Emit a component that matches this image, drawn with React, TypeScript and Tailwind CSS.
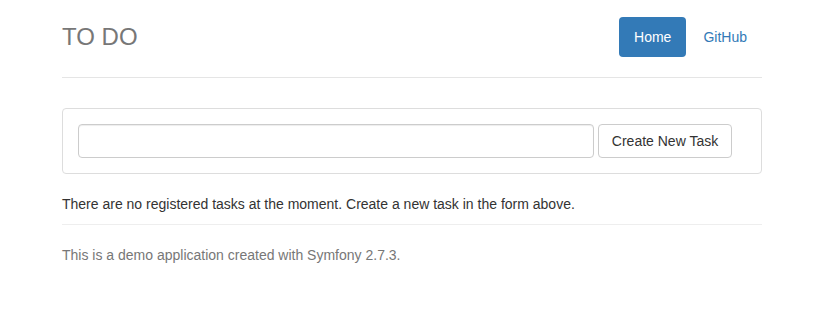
import React from 'react';

const App: React.FC = () => {
  return (
    <div className="min-h-screen bg-white font-['Liberation_Sans',Arial,sans-serif] text-[14px] leading-5 text-[#333]">
      <div className="ml-[62px] w-[700px] pt-[17px]">
        {/* Header */}
        <div className="flex items-center justify-between border-b border-[#e5e5e5] pb-5">
          <h3 className="text-[24px] leading-10 text-[#777]">TO DO</h3>
          <nav className="flex gap-[2px]">
            <a className="rounded-[4px] bg-[#337ab7] px-[15px] py-[10px] text-white">Home</a>
            <a className="rounded-[4px] px-[15px] py-[10px] text-[#337ab7]">GitHub</a>
          </nav>
        </div>

        {/* Form panel */}
        <div className="mt-[30px] rounded-[4px] border border-[#ddd] p-[15px]">
          <form className="flex gap-1">
            <input
              type="text"
              className="h-[34px] w-[516px] rounded-[4px] border border-[#ccc] px-3 shadow-[inset_0_1px_1px_rgba(0,0,0,0.075)] outline-none"
            />
            <button
              type="button"
              className="h-[34px] w-[134px] rounded-[4px] border border-[#ccc] bg-white px-3 text-[#333]"
            >
              Create New Task
            </button>
          </form>
        </div>

        <p className="mt-5">There are no registered tasks at the moment. Create a new task in the form above.</p>
        <hr className="mt-[10px] border-t border-[#eee]" />
        <footer className="pt-5 text-[#777]">This is a demo application created with Symfony 2.7.3.</footer>
      </div>
    </div>
  );
};

export default App;
